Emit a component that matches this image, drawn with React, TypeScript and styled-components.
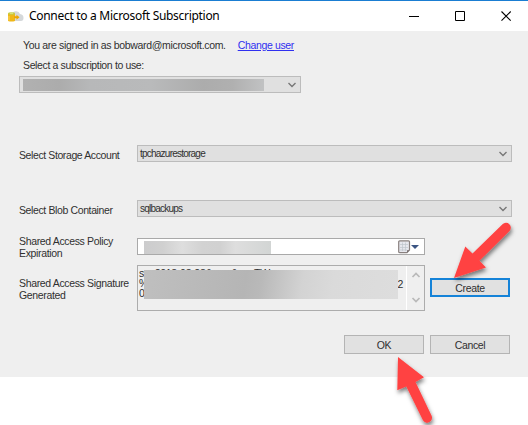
import React from "react";
import styled, { createGlobalStyle } from "styled-components";

const GlobalStyle = createGlobalStyle`
  * { box-sizing: border-box; }
  body { margin: 0; background: #fff; overflow: hidden; }
`;

const Desktop = styled.div`
  position: relative;
  width: 528px;
  height: 425px;
  overflow: hidden;
  background: #fff;
  color: #303030;
  font: 10.5px/12px "Liberation Sans", Arial, sans-serif;
`;

const Dialog = styled.main`
  height: 377px;
  display: flex;
  flex-direction: column;
  background: #efefef;
`;

const TitleBar = styled.header`
  flex: none;
  height: 31px;
  display: flex;
  align-items: center;
  padding-left: 7px;
  border-top: 1px solid #1a7dd2;
  background: #fff;
`;

const Title = styled.h1`
  flex: 1;
  margin: 0 0 0 5px;
  color: #000;
  font: 12px/16px "Noto Sans", "Open Sans", sans-serif;
  letter-spacing: -0.3px;
  white-space: nowrap;
`;

const WindowControls = styled.div`
  display: flex;
  gap: 35px;
  margin-right: 16px;
`;

const ControlButton = styled.button`
  display: flex;
  width: 11px;
  height: 11px;
  padding: 0;
  border: 0;
  background: none;
`;

const Account = styled.section`
  flex: none;
  height: 114px;
  padding: 8px 0 0 19px;
`;

const Line = styled.div<{ $tracking?: number }>`
  display: flex;
  height: 12px;
  padding-left: 4px;
  white-space: nowrap;
  letter-spacing: ${(p) => p.$tracking ?? 0}px;
`;

const Prompt = styled(Line)`
  margin-top: 8px;
`;

const UserLink = styled.a`
  margin-left: 12px;
  color: #3030f0;
  text-decoration: underline;
  letter-spacing: -0.35px;
`;

const Combo = styled.div<{ $width: number }>`
  flex: none;
  display: flex;
  align-items: center;
  justify-content: space-between;
  width: ${(p) => p.$width}px;
  height: 17px;
  padding: 0 3px 0 2px;
  border: 1px solid #bcbcbc;
  background: #e0e0e0;
  white-space: nowrap;
  font-size: 10px;
  letter-spacing: -0.77px;
`;

const AccountCombo = styled(Combo)`
  margin-top: 5px;
  padding-left: 3px;
`;

const Redaction = styled.div<{ $width: number; $height: number; $fill: string }>`
  width: ${(p) => p.$width}px;
  height: ${(p) => p.$height}px;
  background: ${(p) => p.$fill};
`;

const Field = styled.div<{ $height: number; $gap: number }>`
  flex: none;
  display: flex;
  height: ${(p) => p.$height}px;
  margin-bottom: ${(p) => p.$gap}px;
  padding-left: 19px;
`;

const Label = styled.label<{ $top: number; $tracking: number }>`
  flex: none;
  width: 118px;
  margin-top: ${(p) => p.$top}px;
  white-space: pre;
  letter-spacing: ${(p) => p.$tracking}px;
`;

const DateBox = styled.div`
  display: flex;
  align-items: center;
  width: 288px;
  height: 17px;
  padding: 1px 4px 0 6px;
  border: 1px solid #a9a9a9;
  background: #fff;
`;

const DateIcons = styled.div`
  display: flex;
  margin-left: auto;
`;

const SignatureBox = styled.div`
  position: relative;
  display: flex;
  width: 288px;
  height: 46px;
  border: 1px solid #acacac;
  background: #efefef;
`;

const SignatureText = styled.div`
  flex: 1;
  display: flex;
  justify-content: space-between;
  padding: 2px 3px 0 1px;
  line-height: 10px;
  letter-spacing: -0.3px;
  white-space: pre;
  overflow: hidden;
`;

const Tail = styled.span`
  padding-top: 11px;
`;

const SignatureCover = styled(Redaction)`
  position: absolute;
  left: 6px;
  top: 4px;
`;

const Scrollbar = styled.div`
  flex: none;
  width: 18px;
  display: flex;
  flex-direction: column;
  align-items: center;
  justify-content: space-between;
  padding: 5px 0 6px;
  border-left: 1px solid #fff;
`;

const Button = styled.button<{ $focused?: boolean }>`
  flex: none;
  width: 80px;
  height: 19px;
  padding: 0;
  border: ${(p) => (p.$focused ? "2px solid #1583d8" : "1px solid #b4b4b4")};
  background: #e1e1e1;
  color: #303030;
  font: inherit;
  letter-spacing: -0.35px;
`;

const CreateButton = styled(Button)`
  margin: 13px 0 0 5px;
`;

const Actions = styled.footer`
  display: flex;
  gap: 6px;
  margin-top: 24px;
  padding-left: 344px;
`;

const Annotations = styled.svg`
  position: absolute;
  inset: 0;
  pointer-events: none;
`;

const Chevron = () => (
  <svg width="10" height="6" viewBox="0 0 10 6">
    <path d="M1.5 1 L5 4.5 L8.5 1" fill="none" stroke="#777" strokeWidth="1.4" />
  </svg>
);

const ScrollArrow = ({ up = false }: { up?: boolean }) => (
  <svg width="10" height="8" viewBox="0 0 10 8">
    <path d={up ? "M1.5 6 L5 2.5 L8.5 6" : "M1.5 2 L5 5.5 L8.5 2"} fill="none" stroke="#b9b9b9" strokeWidth="1.7" />
  </svg>
);

const CloudStorageIcon = () => (
  <svg width="17" height="13" viewBox="0 0 17 13">
    <path d="M5 10.5V4.5Q6 1 9 1.2Q12 1 13 4Q16.6 4.6 16.5 8Q16.5 10.8 14 11H5Z" fill="#d5d8da" />
    <path d="M1 3.5H8V11Q4.5 12.2 1 11Z" fill="#efb719" />
    <ellipse cx="4.5" cy="3.5" rx="3.5" ry="1.3" fill="#c3cd45" />
    <ellipse cx="4.5" cy="3.3" rx="1.8" ry=".5" fill="#e5e887" />
    <path d="M7 6.3H9.5V4.8L12.5 7.3L9.5 9.8V8.3H7Z" fill="#eda600" />
    <path d="M2 6V10.5" stroke="#ffd45b" />
  </svg>
);

const CalendarIcon = () => (
  <svg width="22" height="14" viewBox="0 0 22 14">
    <path d="M.7 1.8Q.7.8 1.7.8H10.5Q11.5.8 11.5 1.8V10L9 12.7H1.7Q.7 12.7.7 11.7Z" fill="#e6e7ed" stroke="#89817f" strokeWidth="1.2" />
    <path d="M2 4.5H10M2 7.5H10M2 10H9M4.5 2.5V11M7.5 2.5V11" stroke="#bfc5cc" strokeWidth=".7" />
    <path d="M9 12.5V10.2H11.3Z" fill="#746c6c" />
    <path d="M13 5H21L17 9Z" fill="#3b5583" />
  </svg>
);

export default function App() {
  return (
    <>
      <GlobalStyle />
      <Desktop>
        <Dialog>
          <TitleBar>
            <CloudStorageIcon />
            <Title>Connect to a Microsoft Subscription</Title>
            <WindowControls>
              <ControlButton aria-label="Minimize">
                <svg width="11" height="11"><path d="M0 5.5H10" stroke="#000" /></svg>
              </ControlButton>
              <ControlButton aria-label="Maximize">
                <svg width="11" height="11"><path d="M.5.5H9.5V9.5H.5Z" fill="none" stroke="#000" /></svg>
              </ControlButton>
              <ControlButton aria-label="Close">
                <svg width="11" height="11"><path d="M.5.5L9.7 9.7M9.7.5L.5 9.7" stroke="#000" strokeWidth="1.1" /></svg>
              </ControlButton>
            </WindowControls>
          </TitleBar>

          <Account>
            <Line $tracking={-0.33}>
              You are signed in as bobward@microsoft.com.
              <UserLink>Change user</UserLink>
            </Line>
            <Prompt $tracking={-0.36}>Select a subscription to use:</Prompt>
            <AccountCombo $width={282}>
              <Redaction $width={241} $height={12} $fill="linear-gradient(90deg,#b1b1b1,#acacac 15%,#b7b8b9 28%,#b9babb 53%,#acacac 75%,#b0b0b0 87%,#c1c2c3)" />
              <Chevron />
            </AccountCombo>
          </Account>

          <Field $height={17} $gap={38}>
            <Label $top={4} $tracking={-0.4}>Select Storage Account</Label>
            <Combo $width={375}>tpchazurestorage<Chevron /></Combo>
          </Field>
          <Field $height={17} $gap={21}>
            <Label $top={4} $tracking={-0.38}>Select Blob Container</Label>
            <Combo $width={375}>sqlbackups<Chevron /></Combo>
          </Field>
          <Field $height={17} $gap={10}>
            <Label $top={-3} $tracking={-0.35}>{"Shared Access Policy\nExpiration"}</Label>
            <DateBox>
              <Redaction $width={127} $height={13} $fill="linear-gradient(90deg,#cccccd,#d0d0d0 15%,#dedede 30%,#d2d2d2 46%,#d1d1d1 60%,#dedede 72%,#d2d5d4)" />
              <DateIcons><CalendarIcon /></DateIcons>
            </DateBox>
          </Field>
          <Field $height={46} $gap={0}>
            <Label $top={12} $tracking={-0.35}>{"Shared Access Signature\nGenerated"}</Label>
            <SignatureBox>
              <SignatureText>
                <span>{"sv=2018-03-28&sr=c&sp=TW\n%\n0"}</span>
                <Tail>2</Tail>
              </SignatureText>
              <Scrollbar><ScrollArrow up /><ScrollArrow /></Scrollbar>
              <SignatureCover $width={254} $height={29} $fill="linear-gradient(100deg,#bfbfbf,#b5b5b5 40%,#b9b9b9 46%,#d3d3d3 62%,#dadada 74%,#dddddd)" />
            </SignatureBox>
            <CreateButton $focused>Create</CreateButton>
          </Field>
          <Actions>
            <Button>OK</Button>
            <Button>Cancel</Button>
          </Actions>
        </Dialog>

        <Annotations width="528" height="425" viewBox="0 0 528 425" aria-hidden="true">
          <defs>
            <filter id="arrowShadow" x="-20%" y="-20%" width="150%" height="150%">
              <feDropShadow dx="1" dy="3" stdDeviation="2" floodColor="#000" floodOpacity=".5" />
            </filter>
          </defs>
          <g fill="#ff4343" filter="url(#arrowShadow)">
            <path d="M454 278L465.3 246.5L472.5 253.5L502.5 224.3A4.8 4.8 0 0 1 509.5 231L479.5 260.8L486 267.5Z" />
            <path d="M398 357L424 377.3L415.5 382L431.5 415.5A4.8 4.8 0 0 1 422.8 420L406.3 386.5L397.3 390.3Z" />
          </g>
        </Annotations>
      </Desktop>
    </>
  );
}
